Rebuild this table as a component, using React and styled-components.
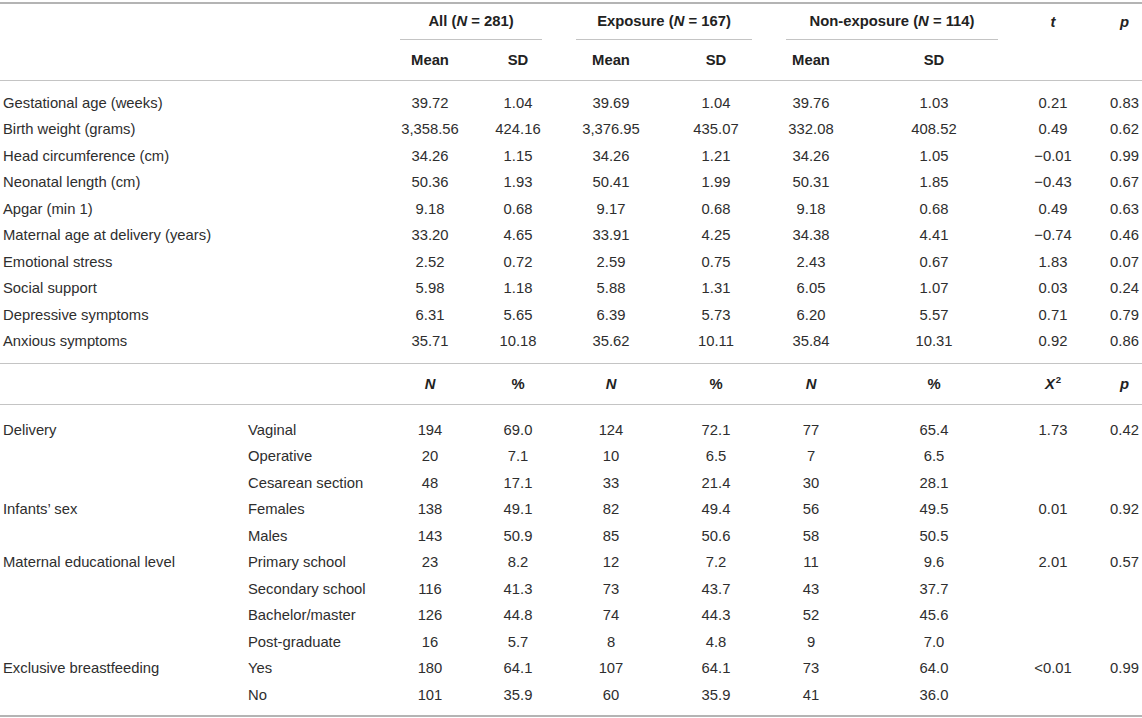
import React from "react";
import styled, { createGlobalStyle } from "styled-components";

const Global = createGlobalStyle`
  html, body { margin: 0; padding: 0; background: #fff; }
  body { font-family: "Liberation Sans", Arial, sans-serif; color: #2e2e2e; }
`;

const COLS = "245px 138px 94px 82px 104px 106px 84px 162px 76px 51px";

const Table = styled.div`
  width: 1142px;
  margin-top: 2px;
  border-top: 2px solid #b4b4b4;
  border-bottom: 2px solid #b4b4b4;
  font-size: 14.8px;
  line-height: 1;
`;

const Head = styled.div`
  display: grid;
  grid-template-columns: ${COLS};
  grid-template-rows: 36px 40px;
  border-bottom: 1px solid #c4c4c4;
  font-weight: bold;
  color: #222;
`;

const SubHead = styled.div`
  display: grid;
  grid-template-columns: ${COLS};
  height: 40px;
  border-bottom: 1px solid #c4c4c4;
  font-weight: bold;
  color: #222;
`;

const Section = styled.div`
  padding: ${(p) => p.$pad};
  ${(p) => p.$divider && "border-bottom: 1px solid #c4c4c4;"}
`;

const Row = styled.div`
  display: grid;
  grid-template-columns: ${COLS};
  height: 26.5px;
`;

const Cell = styled.div`
  display: flex;
  align-items: center;
  justify-content: ${(p) => (p.$left ? "flex-start" : "center")};
  padding-left: ${(p) => (p.$left ? "3px" : p.$last ? "16px" : "0")};
  white-space: nowrap;
  grid-column: ${(p) => p.$col || "auto"};
  grid-row: ${(p) => p.$row || "auto"};
`;

const Spanner = styled.div`
  grid-column: ${(p) => p.$col};
  grid-row: 1;
  margin: 0 17px;
  border-bottom: 1px solid #c4c4c4;
  display: flex;
  align-items: center;
  justify-content: center;
  white-space: nowrap;
`;

const It = styled.i`
  font-style: italic;
`;

const Sym = styled.span`
  display: inline-block;
`;

const Sup = styled.sup`
  font-size: 0.65em;
  vertical-align: 0.6em;
  line-height: 0;
  margin-left: 1px;
`;

const cont = [
  ["Gestational age (weeks)", "39.72", "1.04", "39.69", "1.04", "39.76", "1.03", "0.21", "0.83"],
  ["Birth weight (grams)", "3,358.56", "424.16", "3,376.95", "435.07", "332.08", "408.52", "0.49", "0.62"],
  ["Head circumference (cm)", "34.26", "1.15", "34.26", "1.21", "34.26", "1.05", "\u22120.01", "0.99"],
  ["Neonatal length (cm)", "50.36", "1.93", "50.41", "1.99", "50.31", "1.85", "\u22120.43", "0.67"],
  ["Apgar (min 1)", "9.18", "0.68", "9.17", "0.68", "9.18", "0.68", "0.49", "0.63"],
  ["Maternal age at delivery (years)", "33.20", "4.65", "33.91", "4.25", "34.38", "4.41", "\u22120.74", "0.46"],
  ["Emotional stress", "2.52", "0.72", "2.59", "0.75", "2.43", "0.67", "1.83", "0.07"],
  ["Social support", "5.98", "1.18", "5.88", "1.31", "6.05", "1.07", "0.03", "0.24"],
  ["Depressive symptoms", "6.31", "5.65", "6.39", "5.73", "6.20", "5.57", "0.71", "0.79"],
  ["Anxious symptoms", "35.71", "10.18", "35.62", "10.11", "35.84", "10.31", "0.92", "0.86"],
];

const cat = [
  ["Delivery", "Vaginal", "194", "69.0", "124", "72.1", "77", "65.4", "1.73", "0.42"],
  ["", "Operative", "20", "7.1", "10", "6.5", "7", "6.5", "", ""],
  ["", "Cesarean section", "48", "17.1", "33", "21.4", "30", "28.1", "", ""],
  ["Infants\u2019 sex", "Females", "138", "49.1", "82", "49.4", "56", "49.5", "0.01", "0.92"],
  ["", "Males", "143", "50.9", "85", "50.6", "58", "50.5", "", ""],
  ["Maternal educational level", "Primary school", "23", "8.2", "12", "7.2", "11", "9.6", "2.01", "0.57"],
  ["", "Secondary school", "116", "41.3", "73", "43.7", "43", "37.7", "", ""],
  ["", "Bachelor/master", "126", "44.8", "74", "44.3", "52", "45.6", "", ""],
  ["", "Post-graduate", "16", "5.7", "8", "4.8", "9", "7.0", "", ""],
  ["Exclusive breastfeeding", "Yes", "180", "64.1", "107", "64.1", "73", "64.0", "<0.01", "0.99"],
  ["", "No", "101", "35.9", "60", "35.9", "41", "36.0", "", ""],
];

export default function App() {
  return (
    <>
      <Global />
      <Table>
        <Head>
          <Spanner $col="3 / span 2">
            <span>
              All (<It>N</It>&nbsp;=&nbsp;281)
            </span>
          </Spanner>
          <Spanner $col="5 / span 2">
            <span>
              Exposure (<It>N</It>&nbsp;=&nbsp;167)
            </span>
          </Spanner>
          <Spanner $col="7 / span 2">
            <span>
              Non-exposure (<It>N</It>&nbsp;=&nbsp;114)
            </span>
          </Spanner>
          <Cell $col="9" $row="1">
            <It>t</It>
          </Cell>
          <Cell $col="10" $row="1" $last>
            <It>p</It>
          </Cell>
          <Cell $col="3" $row="2">Mean</Cell>
          <Cell $col="4" $row="2">SD</Cell>
          <Cell $col="5" $row="2">Mean</Cell>
          <Cell $col="6" $row="2">SD</Cell>
          <Cell $col="7" $row="2">Mean</Cell>
          <Cell $col="8" $row="2">SD</Cell>
        </Head>
        <Section $pad="9px 0 8px" $divider>
          {cont.map((r) => (
            <Row key={r[0]}>
              <Cell $left $col="1 / span 2">{r[0]}</Cell>
              {r.slice(1).map((v, i) => (
                <Cell key={i} $last={i === 7}>
                  {v}
                </Cell>
              ))}
            </Row>
          ))}
        </Section>
        <SubHead>
          <Cell $col="3"><It>N</It></Cell>
          <Cell>%</Cell>
          <Cell><It>N</It></Cell>
          <Cell>%</Cell>
          <Cell><It>N</It></Cell>
          <Cell>%</Cell>
          <Cell>
            <Sym>
              <It>X</It>
              <Sup>2</Sup>
            </Sym>
          </Cell>
          <Cell $last><It>p</It></Cell>
        </SubHead>
        <Section $pad="12px 0 6px">
          {cat.map((r, idx) => (
            <Row key={idx}>
              <Cell $left>{r[0]}</Cell>
              <Cell $left>{r[1]}</Cell>
              {r.slice(2).map((v, i) => (
                <Cell key={i} $last={i === 7}>
                  {v}
                </Cell>
              ))}
            </Row>
          ))}
        </Section>
      </Table>
    </>
  );
}
